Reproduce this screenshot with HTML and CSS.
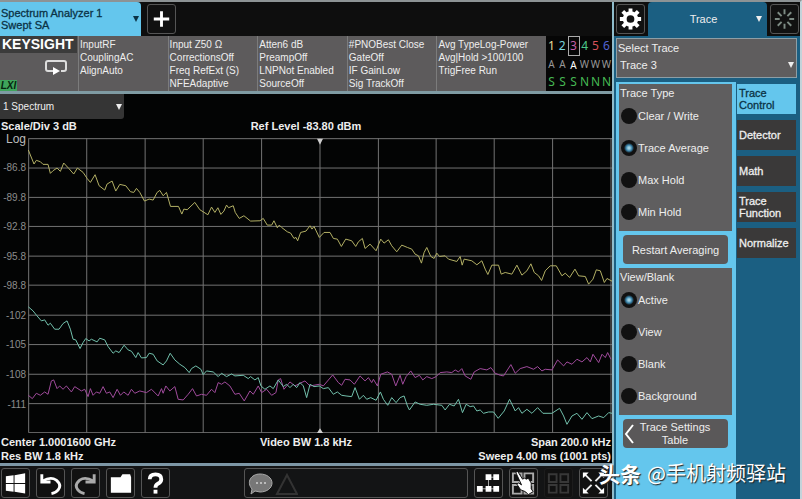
FILE: index.html
```html
<!DOCTYPE html>
<html lang="en">
<head>
  <meta charset="UTF-8">
  <title>Spectrum Analyzer</title>
  <link rel="stylesheet" href="styles.css">
</head>
<body>

  <main class="analyzer">
    <header class="tabs">
      <button class="mode-tab"><span>Spectrum Analyzer 1<br>Swept SA</span><i class="arrow"></i></button>
      <button class="icon-btn" aria-label="Add screen">
        <svg viewBox="0 0 28 28"><path d="M14 6v16M6 14h16" stroke="#fff" stroke-width="3"/></svg>
      </button>
    </header>

    <section class="info">
      <div class="brand">
        <strong>KEYSIGHT</strong>
        <svg class="loop" viewBox="0 0 24 16"><path d="M9 12H4q-2 0-2-2V4q0-2 2-2h16q2 0 2 2v6q0 2-2 2h-3" fill="none" stroke="#ddd" stroke-width="2"/><path d="M9 8l7 4-7 4z" fill="#fff"/></svg>
        <em>LXI</em>
      </div>
      <div>InputRF<br>CouplingAC<br>AlignAuto</div>
      <div>Input Z50 Ω<br>CorrectionsOff<br>Freq RefExt (S)<br>NFEAdaptive</div>
      <div>Atten6 dB<br>PreampOff<br>LNPNot Enabled<br>SourceOff</div>
      <div>#PNOBest Close<br>GateOff<br>IF GainLow<br>Sig TrackOff</div>
      <div>Avg TypeLog-Power<br>Avg|Hold &gt;100/100<br>TrigFree Run</div>
      <table class="trace-table">
        <tr><td class="t1">1</td><td class="t2">2</td><td class="t3">3</td><td class="t4">4</td><td class="t5">5</td><td class="t6">6</td></tr>
        <tr class="types"><td>A</td><td>A</td><td class="on">A</td><td>W</td><td>W</td><td>W</td></tr>
        <tr class="dets"><td>S</td><td>S</td><td>S</td><td>N</td><td>N</td><td>N</td></tr>
      </table>
    </section>

    <section class="display">
      <div class="dropdown window-select">
        <select aria-label="Window"><option>1 Spectrum</option></select>
      </div>
      <div class="readout top"><span>Scale/Div 3 dB</span><span class="mid">Ref Level -83.80 dBm</span><span></span></div>
      <div class="graph">
        <div class="axis">
          <b>Log</b><span>-86.8</span><span>-89.8</span><span>-92.8</span><span>-95.8</span><span>-98.8</span><span>-102</span><span>-105</span><span>-108</span><span>-111</span>
        </div>
        <svg class="plot" viewBox="85 57 1750 885" preserveAspectRatio="none">
          <path class="grid" d="M87 58V940M261 58V940M436 58V940M610 58V940M785 58V940M960 58V940M1135 58V940M1308 58V940M1482 58V940M1657 58V940M1832 58V940M87 59H1835M87 147H1835M87 235H1835M87 322H1835M87 411H1835M87 498H1835M87 588H1835M87 676H1835M87 765H1835M87 853H1835M87 940H1835"/>
          <polyline class="yellow" points="86,93 103,135 110,124 122,128 130,136 145,136 152,163 160,155 172,147 182,157 192,132 207,148 222,165 233,147 250,160 262,178 272,190 286,167 298,200 315,213 322,195 337,186 348,216 360,196 378,200 392,218 402,220 410,208 420,220 434,246 448,240 460,243 472,220 480,214 490,230 500,220 512,262 536,262 546,285 552,270 562,272 585,250 600,272 624,287 635,264 645,280 654,266 663,286 672,276 680,258 686,266 700,260 706,280 718,298 732,290 752,306 780,305 790,298 802,318 815,318 822,305 832,326 838,318 845,325 862,338 872,342 882,358 888,355 893,365 902,340 918,336 930,320 936,330 942,322 958,355 972,340 990,340 1000,358 1012,360 1024,382 1037,360 1055,365 1067,382 1075,368 1087,358 1095,388 1110,375 1128,395 1142,360 1152,372 1165,362 1175,380 1190,398 1205,378 1222,385 1235,390 1245,405 1255,410 1264,432 1272,400 1280,385 1292,412 1302,418 1310,402 1318,412 1335,410 1345,420 1370,427 1380,412 1386,438 1392,420 1415,425 1430,437 1445,425 1455,450 1463,466 1475,438 1495,438 1503,465 1515,460 1535,465 1550,438 1565,468 1580,455 1592,434 1602,460 1615,470 1624,484 1635,455 1650,440 1668,440 1685,470 1695,462 1708,475 1724,450 1735,470 1755,472 1765,495 1778,480 1788,452 1800,455 1812,490 1820,478 1835,486"/>
          <g transform="translate(0 510)">
            <polyline class="magenta" points="86,318 98,328 110,312 122,318 135,308 145,315 155,275 162,272 172,298 180,290 190,300 200,290 215,308 225,292 245,305 255,300 265,322 272,298 280,318 290,308 300,312 310,292 320,312 330,308 340,325 352,300 362,318 372,308 385,318 395,300 405,312 420,305 440,310 455,300 475,320 485,298 490,312 498,290 510,305 525,292 535,330 550,332 565,315 578,298 590,320 605,315 620,318 635,300 645,310 655,280 665,285 675,278 690,290 705,315 718,312 733,335 750,305 760,315 775,290 785,310 800,300 815,318 828,310 835,272 842,268 852,300 870,278 885,290 900,282 915,275 930,290 958,285 970,290 998,257 1015,280 1025,288 1035,270 1050,272 1063,285 1080,260 1095,275 1105,265 1115,280 1120,270 1132,290 1142,255 1162,248 1175,255 1187,290 1200,258 1208,285 1218,262 1232,245 1245,265 1258,258 1268,272 1280,262 1295,268 1308,262 1320,250 1340,248 1355,250 1365,242 1375,248 1385,238 1395,260 1412,270 1422,248 1440,238 1460,242 1472,235 1485,252 1500,258 1510,260 1532,226 1545,252 1560,238 1580,232 1600,240 1612,232 1625,245 1635,240 1655,242 1672,212 1690,230 1700,218 1715,225 1730,210 1745,218 1760,205 1770,218 1778,195 1795,220 1805,195 1815,205 1822,190 1832,210"/>
            <polyline class="teal" points="86,53 100,65 112,80 125,95 135,92 145,108 152,102 165,120 178,120 190,103 202,95 212,120 220,150 228,152 241,178 250,160 258,148 268,155 275,150 292,158 300,147 315,152 325,172 340,192 348,185 358,190 373,168 385,182 395,186 408,205 415,190 425,206 440,205 448,192 460,195 472,215 490,227 500,215 511,192 525,212 540,225 555,235 568,250 575,238 588,230 603,240 610,256 620,245 640,248 655,262 665,252 680,262 695,254 705,260 730,258 745,268 752,262 765,272 775,265 783,290 795,300 810,290 820,298 835,272 850,292 860,285 870,295 880,285 890,295 900,280 910,290 920,325 930,285 942,292 958,290 970,298 985,295 1000,315 1012,308 1025,318 1038,320 1055,322 1065,295 1078,330 1090,318 1100,330 1112,325 1128,333 1141,308 1150,330 1163,348 1175,325 1188,340 1200,325 1212,320 1222,350 1228,362 1245,338 1260,345 1280,348 1300,345 1325,348 1335,362 1348,345 1362,350 1375,330 1387,370 1398,345 1410,352 1420,350 1430,365 1440,362 1450,372 1465,368 1480,368 1494,387 1512,365 1528,330 1545,365 1555,355 1565,372 1580,360 1595,372 1612,355 1628,372 1655,372 1678,357 1690,380 1700,405 1715,380 1730,372 1745,390 1760,370 1775,388 1795,380 1810,385 1825,370 1835,372"/>
          </g>
          <path fill="#ccc" d="M951 59h18l-9 18zM951 941h18l-9-14z"/>
        </svg>
      </div>
      <div class="readout"><span>Center 1.0001600 GHz<br>Res BW 1.8 kHz</span><span class="mid">Video BW 1.8 kHz</span><span class="end">Span 200.0 kHz<br>Sweep 4.00 ms (1001 pts)</span></div>
    </section>

    <footer class="toolbar">
      <button class="icon-btn" aria-label="Start">
        <svg viewBox="0 0 28 28"><path fill="#fff" d="M4 7l8-1v8H4zM13 6l11-2v10H13zM4 15h8v8l-8-1zM13 15h11v10l-11-2z"/></svg>
      </button>
      <button class="icon-btn" aria-label="Undo">
        <svg viewBox="0 0 28 28"><path d="M5 5v8h9" fill="none" stroke="#fff" stroke-width="3"/><path d="M6 12q8-5 14-1 6 5 2 10-2 3-7 4" fill="none" stroke="#fff" stroke-width="3"/></svg>
      </button>
      <button class="icon-btn" aria-label="Redo">
        <svg viewBox="0 0 28 28"><path d="M23 5v8h-9" fill="none" stroke="#aaa" stroke-width="3"/><path d="M22 12q-8-5-14-1-6 5-2 10 2 3 7 4" fill="none" stroke="#aaa" stroke-width="3"/></svg>
      </button>
      <button class="icon-btn" aria-label="Files">
        <svg viewBox="0 0 28 28"><path fill="#fff" d="M4 8h10l2-3h8l1 3v16H4z"/></svg>
      </button>
      <button class="icon-btn" aria-label="Help">
        <svg viewBox="0 0 28 28"><path d="M8 10q0-5 6-5t6 5q0 3-4 5-2 1-2 4" fill="none" stroke="#fff" stroke-width="4"/><path fill="#fff" d="M12 21h4v4h-4z"/></svg>
      </button>
      <div class="messages">
        <svg viewBox="0 0 52 28"><path d="M14 5c7 0 12 4 12 9s-5 9-12 9l-5-1-4 3 1-5C0 13 5 5 14 5z" fill="#777" stroke="#aaa"/><path d="M10 14h2m2 0h2m2 0h2" stroke="#bbb" stroke-width="2"/><path d="M41 6l10 19H31z" fill="none" stroke="#333" stroke-width="2"/></svg>
      </div>
      <button class="icon-btn" aria-label="Block diagram">
        <svg viewBox="0 0 28 28"><path d="M14 8v12M14 8h8M5 20h18" stroke="#aaa"/><path fill="#fff" d="M11 5h6v6h-6zM19 5h6v6h-6zM2 17h6v6H2zM11 17h6v6h-6zM19 17h6v6h-6z"/></svg>
      </button>
      <button class="icon-btn" aria-label="Touch">
        <svg viewBox="0 0 28 28"><path d="M3 4h9v9H3zM15 4h9v9h-9zM3 16h9v9H3zM15 16h9v9h-9z" fill="none" stroke="#aaa" stroke-width="2"/><path d="M6 3l2-1 5 8 2-1 2 1 2-1 3 5v6l2 3-5 3-3-3-5-2-4-6 2-1 3 2z" fill="#fff" stroke="#111"/></svg>
      </button>
      <button class="icon-btn plain" aria-label="Layout">
        <svg viewBox="0 0 28 28"><path d="M4 5h8v8H4zM16 5h8v8h-8zM4 16h8v8H4zM16 16h8v8h-8z" fill="none" stroke="#383838" stroke-width="2"/></svg>
      </button>
      <button class="icon-btn" aria-label="Full screen">
        <svg viewBox="0 0 28 28"><path d="M5 5l7 7M16 16l7 7M23 5l-7 7M12 16l-7 7" stroke="#eee" stroke-width="2"/><path fill="#fff" d="M3 3h6l-6 6zM25 3v6l-6-6zM3 25v-6l6 6zM25 25h-6l6-6z"/></svg>
      </button>
    </footer>
  </main>

  <aside class="panel">
    <div class="panel-head">
      <button class="icon-btn" aria-label="Settings">
        <svg viewBox="0 0 28 28"><circle cx="14" cy="14" r="6" fill="none" stroke="#fff" stroke-width="4"/><path d="M14 3v5M14 20v5M3 14h5M20 14h5M6 6l4 4M18 18l4 4M22 6l-4 4M10 18l-4 4" stroke="#fff" stroke-width="4"/></svg>
      </button>
      <button class="panel-tab"><span>Trace</span><i class="arrow"></i></button>
      <button class="icon-btn" aria-label="Busy">
        <svg viewBox="0 0 28 28"><path d="M14 4v5M14 19v5M4 14h5M19 14h5M7 7l4 4M17 17l4 4M21 7l-4 4M11 17l-4 4" stroke="#7d8b84" stroke-width="2"/></svg>
      </button>
    </div>

    <div class="select-trace">
      <label for="trace">Select Trace</label>
      <div class="dropdown">
        <select id="trace"><option>Trace 3</option></select>
      </div>
    </div>

    <div class="panel-body">
      <form class="controls">
        <fieldset>
          <legend>Trace Type</legend>
          <label><input type="radio" name="type">Clear / Write</label>
          <label><input type="radio" name="type" checked>Trace Average</label>
          <label><input type="radio" name="type">Max Hold</label>
          <label><input type="radio" name="type">Min Hold</label>
        </fieldset>
        <button type="button" class="action">Restart Averaging</button>
        <fieldset>
          <legend>View/Blank</legend>
          <label><input type="radio" name="view" checked>Active</label>
          <label><input type="radio" name="view">View</label>
          <label><input type="radio" name="view">Blank</label>
          <label><input type="radio" name="view">Background</label>
        </fieldset>
        <button type="button" class="action table-btn">
          <svg viewBox="0 0 10 20"><path d="M9 1L2 10l7 9" fill="none" stroke="#fff" stroke-width="2"/></svg>
          <span>Trace Settings<br>Table</span>
        </button>
      </form>
      <nav class="side-tabs">
        <button class="active">Trace<br>Control</button>
        <button>Detector</button>
        <button>Math</button>
        <button>Trace<br>Function</button>
        <button>Normalize</button>
      </nav>
    </div>
  </aside>

  <div class="watermark" lang="zh"><b>头条</b><span>@手机射频驿站</span></div>

</body>
</html>
```
FILE: styles.css
```css
* {
  box-sizing: border-box;
}
body {
  display: flex;
  min-height: 100vh;
  margin: 0;
  background: #0e0e0e;
  color: #eee;
  font: 11px/12px "Liberation Sans", Arial, sans-serif;
  border-top: 2px solid #8d9395;
  border-right: 2px solid #c3d3da;
}
button, select {
  font: inherit;
  color: inherit;
  border: none;
  padding: 0;
  cursor: pointer;
}
.arrow, .dropdown::after {
  content: "";
  width: 0;
  height: 0;
  border: 3px solid transparent;
  border-top: 6px solid currentColor;
  border-bottom: none;
}
.analyzer {
  flex: 1;
  display: flex;
  flex-direction: column;
  min-width: 0;
}

/* top tabs */
.tabs {
  display: flex;
  align-items: center;
  gap: 6px;
  height: 34px;
}
.mode-tab {
  display: flex;
  justify-content: space-between;
  align-items: center;
  width: 141px;
  height: 34px;
  padding: 0 2px 0 1px;
  background: #64c6ed;
  color: #0b3346;
  text-align: left;
  border-radius: 0 4px 0 0;
  -webkit-text-stroke: 0.3px;
}
.icon-btn {
  width: 29px;
  height: 30px;
  background: #111;
  border: 1px solid #555;
  border-radius: 3px;
  flex: none;
}
.icon-btn svg {
  display: block;
  width: 100%;
  height: 100%;
}
.icon-btn.plain {
  border-color: #1c1c1c;
}

/* measurement settings */
.info {
  display: grid;
  grid-template-columns: 78px repeat(4, minmax(0, 90fr)) minmax(0, 110fr) 66px;
  height: 58px;
  background: #5d5b5c;
  border-bottom: 3px solid #7f9ba3;
  font-size: 10px;
  line-height: 13px;
  white-space: nowrap;
}
.info > div {
  padding: 2px 0 0 1px;
  border-left: 1px solid #7c7c7c;
}
.info > .brand {
  display: flex;
  flex-direction: column;
  justify-content: space-between;
  padding: 0;
  border: none;
}
.brand strong {
  width: 77px;
  padding: 1px 0 1px 2px;
  background: #3b3b3b;
  font-size: 14px;
  line-height: 15px;
  color: #fff;
}
.brand .loop {
  width: 24px;
  height: 16px;
  margin-left: 44px;
}
.brand em {
  width: 17px;
  background: #3fa45b;
  color: #06250f;
  font-weight: bold;
  line-height: 11px;
  text-align: center;
}
.trace-table {
  background: #060606;
  border-collapse: collapse;
  font: 12px/14px "Noto Sans", sans-serif;
  text-align: center;
  height: 55px;
  table-layout: fixed;
  width: 100%;
}
.trace-table td {
  padding: 0;
}
.t1 { color: #e6dc9a; }
.t2 { color: #7ad4dd; }
.trace-table .t3 { color: #c25fa6; border: 1px solid #aaa; }
.t4 { color: #4cc98a; }
.t5 { color: #d8525a; }
.t6 { color: #5263d0; }
.types { color: #999; font-size: 10px; }
.types .on { color: #fff; }
.dets { color: #45b853; }

/* graph window */
.display {
  flex: 1;
  display: flex;
  flex-direction: column;
  background: #030404;
  border-bottom: 3px solid #7d97a6;
}
.dropdown {
  display: grid;
  align-items: center;
}
.dropdown select {
  grid-area: 1 / 1;
  appearance: none;
  background: none;
  width: 100%;
}
.dropdown::after {
  grid-area: 1 / 1;
  justify-self: end;
  pointer-events: none;
}
.window-select {
  width: 124px;
  height: 25px;
  padding: 0 2px 0 3px;
  background: #353535;
  border-radius: 0 0 3px 0;
  font-size: 10px;
}
.readout {
  display: grid;
  grid-template-columns: 1fr auto 1fr;
  padding: 2px 1px 0 1px;
  font-weight: bold;
  line-height: 14px;
}
.readout.top {
  padding: 0 1px 5px;
}
.readout .end {
  text-align: right;
}
.graph {
  flex: 1;
  display: flex;
}
.axis {
  display: grid;
  grid-template-rows: repeat(10, 1fr);
  align-items: center;
  width: 28px;
  margin: -14px 0 14px;
  padding-right: 2px;
  color: #8c8c8c;
  font-size: 10px;
  text-align: right;
}
.axis b {
  color: #bbb;
  font-size: 12px;
  font-weight: normal;
}
.plot {
  flex: 1;
  width: 0;
  min-width: 0;
}
.plot path, .plot polyline {
  vector-effect: non-scaling-stroke;
}
.plot polyline, .grid {
  fill: none;
}
.grid { stroke: #737373; }
.yellow { stroke: #b3b065; }
.magenta { stroke: #a04b9c; }
.teal { stroke: #72c0ac; }

/* bottom bar */
.toolbar {
  display: flex;
  align-items: center;
  gap: 6px;
  height: 33px;
  padding: 0 4px 0 1px;
  background: #131415;
}
.messages {
  flex: 1;
  height: 30px;
  margin-left: 68px;
  border: 1px solid #555;
  border-radius: 3px;
}
.messages svg {
  display: block;
  width: 52px;
  height: 28px;
  margin-left: 1px;
}

/* trace menu */
.panel {
  display: flex;
  flex-direction: column;
  width: 188px;
  background: #1b5f82;
  border-left: 2px solid #8fbccb;
}
.panel-head {
  display: flex;
  align-items: center;
  gap: 3px;
  height: 34px;
  padding: 0 1px 0 2px;
  background: #0e0e0e;
}
.panel-tab {
  flex: 1;
  display: grid;
  grid-template-columns: 1fr auto;
  align-items: center;
  height: 34px;
  padding: 0 5px 0 3px;
  background: #1b5f82;
  border-radius: 4px 4px 0 0;
}
.select-trace {
  margin: 2px 3px 0 2px;
  padding: 3px 2px 4px 3px;
  background: #5f5d5e;
  border: 1px solid #8d9ea6;
}
.select-trace .dropdown {
  margin-top: 3px;
  height: 16px;
}
.select-trace label {
  margin-left: -2px;
}
.panel-body {
  flex: 1;
  display: flex;
  margin-top: 4px;
}
.controls {
  width: 120px;
  margin-left: 2px;
  padding: 2px 4px 0 3px;
  background: #64c6ed;
}
fieldset {
  display: grid;
  grid-template-rows: 16px;
  grid-auto-rows: 32px;
  margin: 0;
  padding: 0 0 3px 1px;
  border: none;
  background: #5f5e5f;
}
legend {
  float: left;
  padding: 3px 0 0;
}
fieldset label {
  display: flex;
  align-items: center;
  gap: 1px;
}
fieldset input {
  appearance: none;
  width: 16px;
  height: 16px;
  margin: 0 0 0 1px;
  border-radius: 50%;
  background: #111;
}
fieldset input:checked {
  background: radial-gradient(circle, #9fd0e0 1px, #3982a8 3px, #111 5px);
}
.action {
  display: block;
  width: 105px;
  height: 29px;
  margin: 4px 0 4px 4px;
  background: #5a5859;
  border-radius: 4px;
}
.table-btn {
  display: grid;
  grid-template-columns: 10px 1fr;
  align-items: center;
  padding: 0 12px 0 1px;
  line-height: 13px;
  white-space: nowrap;
}
.table-btn svg {
  width: 10px;
  height: 20px;
}
.side-tabs {
  flex: 1;
  display: flex;
  flex-direction: column;
  gap: 6px;
  padding: 2px 4px 0 1px;
}
.side-tabs button {
  height: 30px;
  padding-left: 2px;
  background: #3a3939;
  text-align: left;
  -webkit-text-stroke: 0.3px;
}
.side-tabs .active {
  background: #64c6ed;
  color: #0b3346;
}

.watermark {
  position: absolute;
  right: 16px;
  bottom: 12px;
  display: flex;
  gap: 6px;
  color: #fff;
  font: 20px/28px "Noto Sans CJK SC", sans-serif;
  text-shadow: 1px 1px 1px #222;
}
.watermark b {
  font-size: 21px;
}
```
